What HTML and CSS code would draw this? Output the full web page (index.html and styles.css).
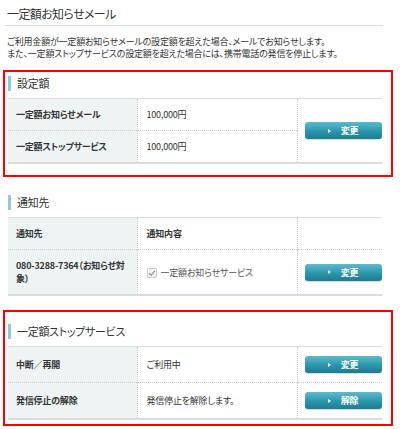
FILE: index.html
```html
<!DOCTYPE html>
<html lang="ja">
<head>
    <meta charset="UTF-8">
    <meta name="viewport" content="width=device-width, initial-scale=1.0">
    <title>一定額お知らせメール</title>
    <link rel="stylesheet" href="styles.css">
</head>
<body>
    <h1 class="page-title">一定額お知らせメール</h1>
    <p class="lead">
        ご利用金額が一定額お知らせメールの設定額を超えた場合、メールでお知らせします。<br>
        また、一定額ストップサービスの設定額を超えた場合には、携帯電話の発信を停止します。
    </p>

    <section class="block block-marked">
        <h2 class="block-title">設定額</h2>
        <table class="info">
            <colgroup><col class="col-label"><col class="col-value"><col class="col-action"></colgroup>
            <tr>
                <th>一定額お知らせメール</th>
                <td>100,000円</td>
                <td class="action" rowspan="2"><a href="#" class="btn">変更</a></td>
            </tr>
            <tr>
                <th>一定額ストップサービス</th>
                <td>100,000円</td>
            </tr>
        </table>
    </section>

    <section class="block block-notify">
        <h2 class="block-title">通知先</h2>
        <table class="info">
            <colgroup><col class="col-label"><col class="col-value"><col class="col-action"></colgroup>
            <tr class="head">
                <th>通知先</th>
                <th class="plain">通知内容</th>
                <td class="action"></td>
            </tr>
            <tr>
                <th>080-3288-7364（お知らせ対象）</th>
                <td class="muted"><span class="check"><svg width="8" height="8" viewBox="0 0 8 8"><path d="M1 4.2 L3.1 6.2 L7 1.6" fill="none" stroke="#9a9a9a" stroke-width="1.4"/></svg></span>一定額お知らせサービス</td>
                <td class="action"><a href="#" class="btn">変更</a></td>
            </tr>
        </table>
    </section>

    <section class="block block-marked block-stop">
        <h2 class="block-title">一定額ストップサービス</h2>
        <table class="info">
            <colgroup><col class="col-label"><col class="col-value"><col class="col-action"></colgroup>
            <tr>
                <th>中断／再開</th>
                <td>ご利用中</td>
                <td class="action"><a href="#" class="btn">変更</a></td>
            </tr>
            <tr>
                <th>発信停止の解除</th>
                <td>発信停止を解除します。</td>
                <td class="action"><a href="#" class="btn">解除</a></td>
            </tr>
        </table>
    </section>
</body>
</html>
```

FILE: styles.css
```css
body {
    margin: 0;
    padding: 0;
    background: #fff;
    color: #333;
    font-family: "Noto Sans CJK JP", "Noto Sans", sans-serif;
    font-feature-settings: "palt";
}
.page-title {
    margin: 0 17px 0 5px;
    padding: 6px 2px 4px;
    font-size: 12px;
    line-height: 15px;
    letter-spacing: -0.6px;
    font-weight: normal;
    color: #333;
    border-bottom: 1px solid #ddd;
}
.lead {
    margin: 10px 0 0;
    padding-left: 7px;
    font-size: 9px;
    line-height: 12px;
    letter-spacing: -0.2px;
    color: #333;
}
.block {
    margin: 10px 7px 0 3px;
    padding: 4px 9px 11px 3px;
    border: 2px solid transparent;
}
.block-marked {
    border-color: #f00;
}
.block-notify {
    margin-top: 12px;
    padding-bottom: 12px;
}
.block-stop {
    margin-top: 0;
    padding-top: 12px;
    padding-bottom: 4px;
}
.block-title {
    margin: 0 0 7px;
    padding-left: 6px;
    border-left: 3px solid #8ccbd9;
    font-size: 11px;
    line-height: 15px;
    letter-spacing: -0.3px;
    font-weight: normal;
    color: #333;
}
.info {
    width: 100%;
    border-collapse: collapse;
    table-layout: fixed;
    border-top: 1px solid #dcdcdc;
    border-bottom: 2px solid #dcdcdc;
    font-size: 9px;
    letter-spacing: -0.2px;
}
.col-label { width: 129px; }
.col-value { width: 160px; }
.col-action { width: 85px; }
.info th,
.info td {
    padding: 9px 8px 9px 9px;
    line-height: 13px;
    text-align: left;
    vertical-align: middle;
    border-top: 1px dotted #ccc;
    border-left: 1px dotted #ccc;
}
.info th {
    padding-left: 8px;
    background: #eef3f4;
    font-weight: bold;
    color: #333;
    border-left: none;
}
.info th.plain {
    background: #fff;
    border-left: 1px dotted #ccc;
    padding-left: 9px;
}
.info td.action {
    padding: 9px 1px 9px 7px;
}
.muted {
    color: #555;
}
.check {
    display: inline-flex;
    align-items: center;
    justify-content: center;
    width: 8px;
    height: 8px;
    margin-right: 4px;
    vertical-align: -1px;
    border: 1px solid #ccc;
    border-radius: 2px;
    background: #f4f4f4;
}
.btn {
    display: flex;
    align-items: center;
    justify-content: center;
    width: 77px;
    height: 17px;
    border-radius: 3px;
    background: linear-gradient(#5bbccd, #2b95aa 55%, #1b7c91);
    color: #fff;
    font-size: 9px;
    font-weight: bold;
    text-decoration: none;
    box-shadow: 0 1px 1px rgba(0, 0, 0, 0.15);
}
.btn::before {
    content: "";
    width: 0;
    height: 0;
    margin-right: 10px;
    border-top: 2px solid transparent;
    border-bottom: 2px solid transparent;
    border-left: 3px solid #fff;
}
```
